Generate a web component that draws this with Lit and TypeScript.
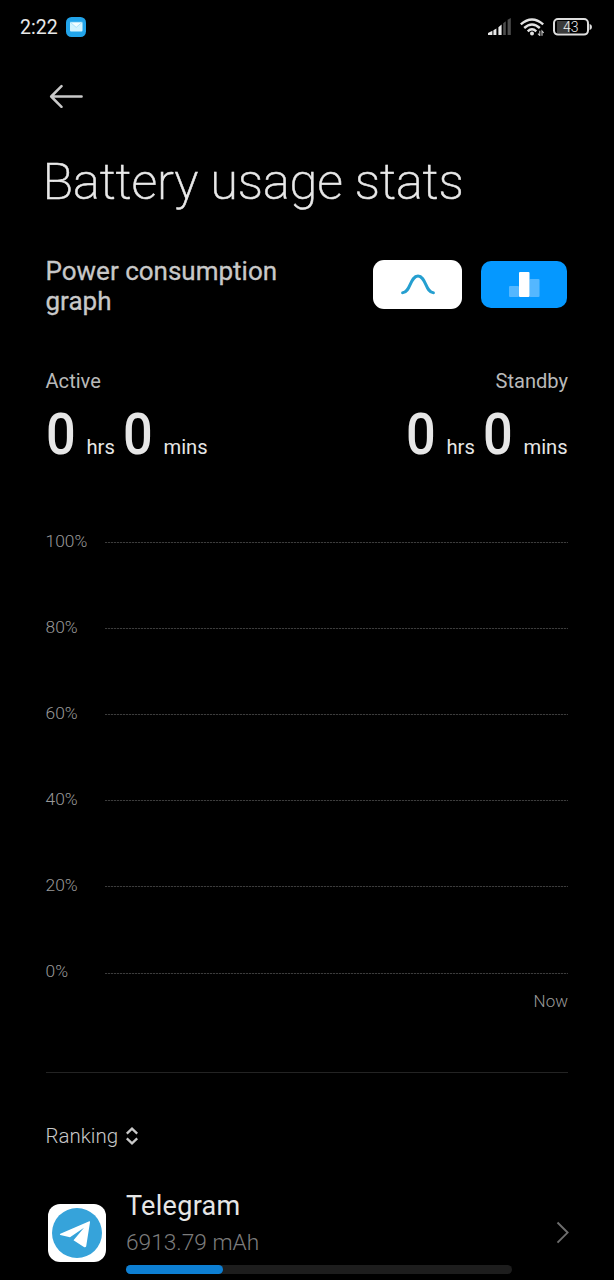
import { LitElement, html, css } from "lit";
import { customElement, property } from "lit/decorators.js";

@customElement("status-bar")
class StatusBar extends LitElement {
  static styles = css`
    :host { display: flex; align-items: center; height: 54px; padding: 0 22px 0 20px; box-sizing: border-box; }
    .time { font-size: 19.5px; color: #e8e8e8; width: 46px; white-space: nowrap; }
    .mail { flex: 1; display: flex; }
    svg { display: block; }
    .signal { margin-right: 9px; }
    .wifi { margin-right: 8px; }
  `;
  render() {
    return html`
      <span class="time">2:22</span>
      <span class="mail">
        <svg width="20" height="20" viewBox="0 0 20 20">
          <rect width="20" height="20" rx="5.5" fill="#22a4ea" />
          <rect x="4" y="5" width="12.5" height="9.5" rx="1" fill="#d3f4ff" />
          <path d="M4.3 5.2L10.2 10.4L16.2 5.2Z" fill="#f4fdff" stroke="#8fd8f8" stroke-width=".7" />
        </svg>
      </span>
      <svg class="signal" width="24" height="18" viewBox="0 0 24 18">
        <path d="M1 17V15L5.4 12.7V17Z M6.4 17V12.2L9.4 10.6V17Z M11.4 17V9.2L14.6 6.6V17Z" fill="#e8e8e8" />
        <path d="M16.2 17V5.2L18.8 3.2V17Z M20.6 17V1.8L23.8 0V17Z" fill="#4d4d4d" />
      </svg>
      <svg class="wifi" width="24" height="18" viewBox="0 0 24 18">
        <g fill="none" stroke="#e2e2e2" stroke-width="2.4">
          <path d="M.8 6.4Q12 -3.4 23.2 6.4" />
          <path d="M4.2 10Q12 3 19.8 10" />
          <path d="M7.7 13.3Q12 9.4 16.3 13.3" />
        </g>
        <circle cx="12" cy="15.6" r="2" fill="#e2e2e2" />
        <path d="M19.8 12.8V17.6L18 15.6M22 17.8V13L23.8 15" fill="none" stroke="#ccc" stroke-width="1.1" />
      </svg>
      <svg width="40" height="18" viewBox="0 0 40 18">
        <rect x="5" y="3" width="13" height="12" fill="#3b3b3b" />
        <rect x="2" y="1" width="34" height="15.6" rx="4" fill="none" stroke="#dedede" stroke-width="2" />
        <path d="M37.6 6V12Q40 11.5 40 9T37.6 6Z" fill="#dedede" />
        <text x="18.8" y="13.8" text-anchor="middle" font-size="14" font-weight="300" fill="#f2f2f2">43</text>
      </svg>
    `;
  }
}

@customElement("usage-time")
class UsageTime extends LitElement {
  @property() label = "";
  static styles = css`
    :host { display: flex; flex-direction: column; width: 162.5px; }
    .label { font-size: 20.1px; line-height: 24px; color: #b9b9b9; }
    :host([end]) .label { text-align: right; }
    .value { display: flex; align-items: baseline; height: 66px; line-height: 66px; margin-top: 9px; color: #e6e6e6; white-space: nowrap; }
    .num { display: inline-block; font-size: 57.5px; font-weight: 500; width: 41px; transform-origin: left; transform: scaleX(0.91); }
    .unit { font-size: 20.2px; }
    .hrs { width: 36px; }
  `;
  render() {
    return html`
      <div class="label">${this.label}</div>
      <div class="value">
        <span class="num">0</span><span class="unit hrs">hrs</span>
        <span class="num">0</span><span class="unit">mins</span>
      </div>
    `;
  }
}

@customElement("level-chart")
class LevelChart extends LitElement {
  static styles = css`
    :host { display: block; }
    .row { display: flex; align-items: center; height: 86px; }
    .label { width: 59.5px; font-size: 17.4px; line-height: 20px; font-weight: 300; color: #999; }
    .line { display: block; flex: 1; height: 1px; margin-top: 3px; background: repeating-linear-gradient(90deg, #3c3c3c 0 2px, #0c0c0c 2px 3px); }
    .row.base .line { margin-top: 5px; }
    .now { text-align: right; font-size: 17px; line-height: 20px; font-weight: 300; color: #999; margin-top: -23px; }
  `;
  render() {
    return html`
      ${[100, 80, 60, 40, 20, 0].map(
        (n) => html`<div class="row ${n === 0 ? "base" : ""}"><span class="label">${n}%</span><span class="line"></span></div>`
      )}
      <div class="now">Now</div>
    `;
  }
}

@customElement("app-root")
class AppRoot extends LitElement {
  static styles = css`
    :host { display: block; height: 1280px; overflow: hidden; background: #000; color: #e6e6e6; font-family: Roboto, sans-serif; }
    svg { display: block; }
    .page { display: flex; flex-direction: column; padding: 0 46px 0 45.5px; }
    .back { margin: 30px 0 0 3.5px; }
    h1 { margin: 42px 0 0 -3px; font-size: 50.5px; line-height: 64px; font-weight: 200; letter-spacing: -0.15px; -webkit-text-stroke: 0.5px #e9e9e9; white-space: nowrap; color: #e9e9e9; }
    .graph { display: flex; align-items: flex-start; margin-top: 42px; height: 61px; }
    .heading { flex: 1; font-size: 26px; line-height: 30.5px; margin-top: -0.5px; font-weight: 400; -webkit-text-stroke: 0.3px #c8c8c8; color: #c8c8c8; }
    .heading span { display: block; width: 260px; }
    .tab { display: flex; align-items: center; justify-content: center; }
    .curve { width: 89px; height: 49px; border-radius: 11px; background: #fff; margin: 4px 19px 0 0; }
    .bars { width: 86px; height: 47px; border-radius: 10px; background: #0598ff; margin: 5px 1px 0 0; }
    .times { display: flex; justify-content: space-between; margin-top: 52px; }
    level-chart { margin-top: 30px; }
    .divider { height: 1px; background: #232323; margin-top: 61px; }
    .ranking { display: flex; align-items: center; gap: 8px; margin-top: 51px; font-size: 20.5px; line-height: 24px; font-weight: 300; color: #c8c8c8; }
    .app { display: flex; margin-top: 42px; }
    .logo { margin: 14px 20px 0 2.5px; flex: none; }
    .info { width: 386px; flex: none; }
    .name { font-size: 27px; line-height: 32px; letter-spacing: 0.3px; color: #e6e6e6; }
    .usage { font-size: 22.7px; line-height: 28px; margin-top: 7px; font-weight: 300; color: #7c7c7c; }
    .track { height: 9px; border-radius: 5px; background: #1d1d1d; margin-top: 8px; }
    .fill { height: 9px; border-radius: 5px; background: #0d7fd3; }
    .chevron { margin: 31px 0 0 44px; flex: none; }
  `;
  render() {
    const share = 25.1;
    return html`
      <status-bar></status-bar>
      <div class="page">
        <svg class="back" width="36" height="24" viewBox="0 0 36 24">
          <path d="M12.5 2.2L2.2 12.5L12.5 22.8M2.6 12.5H32.6" fill="none" stroke="#c9c9c9" stroke-width="2.5" stroke-linecap="round" stroke-linejoin="round" />
        </svg>
        <h1>Battery usage stats</h1>
        <div class="graph">
          <div class="heading"><span>Power consumption graph</span></div>
          <div class="tab curve">
            <svg width="34" height="21" viewBox="0 0 34 21">
              <path d="M1.6 18.8C9.5 18.8 9 2 17 2S24.5 18.8 32.4 18.8" fill="none" stroke="#259fd0" stroke-width="3" stroke-linecap="round" />
            </svg>
          </div>
          <div class="tab bars">
            <svg width="31" height="25" viewBox="0 0 31 25">
              <rect y="14" width="10" height="11" rx="1" fill="#54b7ff" />
              <rect x="20.5" y="7" width="10" height="18" rx="1" fill="#54b7ff" />
              <rect x="10" width="10.5" height="25" rx="1" fill="#fff" />
            </svg>
          </div>
        </div>
        <div class="times">
          <usage-time label="Active"></usage-time>
          <usage-time label="Standby" end></usage-time>
        </div>
        <level-chart></level-chart>
        <div class="divider"></div>
        <div class="ranking">
          <span>Ranking</span>
          <svg width="12" height="18" viewBox="0 0 12 18">
            <path d="M.8 6.6L6 1.6L11.2 6.6M.8 11.4L6 16.4L11.2 11.4" fill="none" stroke="#c9c9c9" stroke-width="2.3" />
          </svg>
        </div>
        <div class="app">
          <svg class="logo" width="58" height="58" viewBox="0 0 58 58">
            <rect width="58" height="58" rx="12" fill="#fff" />
            <circle cx="29" cy="29" r="25" fill="#36a3da" />
            <path d="M12.3 29.8L41.3 17.2Q42.2 17 42 18.2L38.2 42.2Q37.6 44 35.9 43L25.5 36.2L36 23.8L22 33.2L12.3 31Q11.4 30.4 12.3 29.8Z" fill="#fff" />
          </svg>
          <div class="info">
            <div class="name">Telegram</div>
            <div class="usage">6913.79 mAh</div>
            <div class="track"><div class="fill" style="width:${share}%"></div></div>
          </div>
          <svg class="chevron" width="14" height="23" viewBox="0 0 14 23">
            <path d="M1.5 1.5L11.6 11.6L1.5 21.7" fill="none" stroke="#6e6e6e" stroke-width="1.9" />
          </svg>
        </div>
      </div>
    `;
  }
}
